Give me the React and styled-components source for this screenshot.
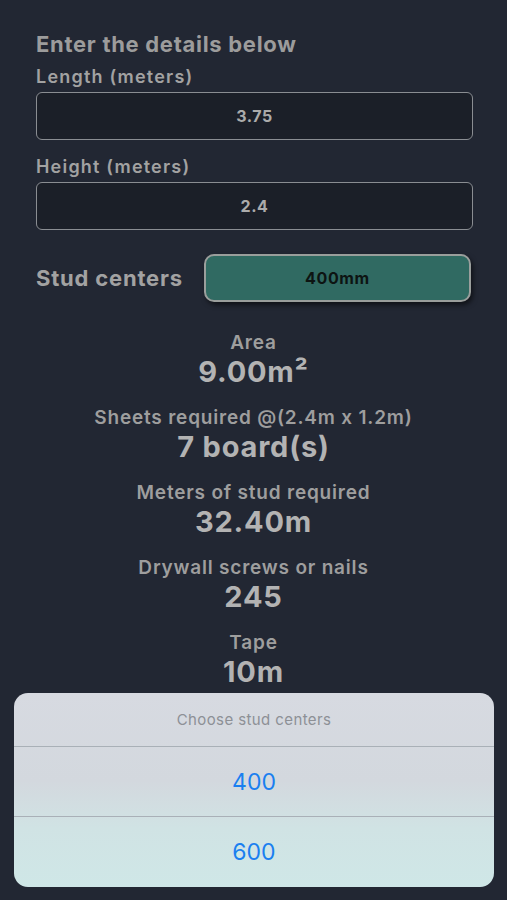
import styled, { createGlobalStyle } from 'styled-components'

const GlobalStyle = createGlobalStyle`
    html, body {
        margin: 0;
        padding: 0;
        background: #222733;
    }
    * {
        box-sizing: border-box;
    }
`

/**
 * Full screen container.
 */
const Screen = styled.div`
    position: relative;
    width: 507px;
    height: 900px;
    overflow: hidden;
    background: #222733;
    font-family: Inter, "Liberation Sans", sans-serif;
`

const Form = styled.section`
    display: flex;
    flex-direction: column;
    padding: 31px 34px 0 36px;
`

const Title = styled.h1`
    margin: 0;
    font-size: 22px;
    line-height: 26px;
    font-weight: 700;
    letter-spacing: 0.7px;
    color: #9c9c9c;
`

const FieldLabel = styled.label`
    margin-top: ${props => props.$gap}px;
    font-size: 18px;
    line-height: 22px;
    font-weight: 600;
    letter-spacing: 1.2px;
    color: #a2a2a2;
`

const Input = styled.div`
    margin-top: 4px;
    height: 48px;
    display: flex;
    align-items: center;
    justify-content: center;
    background: #1b1f28;
    border: 1px solid #8a8d92;
    border-radius: 6px;
    font-size: 16px;
    font-weight: 700;
    letter-spacing: 0.6px;
    color: #ababab;
`

const StudRow = styled.div`
    margin-top: 24px;
    display: flex;
    align-items: center;
    gap: 21px;
    padding-right: 2px;
`

const StudLabel = styled.span`
    font-size: 22px;
    line-height: 26px;
    font-weight: 700;
    letter-spacing: 0.8px;
    color: #a2a2a2;
`

const StudButton = styled.div`
    flex: 1;
    height: 48px;
    display: flex;
    align-items: center;
    justify-content: center;
    background: #306a62;
    border: 2px solid #9a9e9c;
    border-radius: 10px;
    box-shadow: 2px 3px 5px rgba(0, 0, 0, 0.55);
    font-size: 16px;
    font-weight: 700;
    letter-spacing: 0.6px;
    color: #0d1412;
`

const Results = styled.section`
    margin-top: 30px;
    display: flex;
    flex-direction: column;
    align-items: center;
    gap: 18px;
`

const Result = styled.div`
    display: flex;
    flex-direction: column;
    align-items: center;
`

const ResultLabel = styled.span`
    font-size: 19px;
    line-height: 22px;
    font-weight: 600;
    letter-spacing: 0.8px;
    color: #9e9e9e;
`

const ResultValue = styled.span`
    font-size: 29px;
    line-height: 35px;
    font-weight: 700;
    letter-spacing: 0.8px;
    color: #b3b3b3;
`

/**
 * Action sheet lying over the page.
 */
const Sheet = styled.div`
    position: absolute;
    left: 14px;
    right: 13px;
    bottom: 13px;
    border-radius: 14px;
    overflow: hidden;
    background: linear-gradient(180deg, #d7dae1 0%, #d3d8de 45%, #d0e3e4 70%, #cfe7e7 100%);
    display: flex;
    flex-direction: column;
`

const SheetTitle = styled.div`
    height: 54px;
    display: flex;
    align-items: center;
    justify-content: center;
    font-size: 15px;
    letter-spacing: 0.4px;
    color: #8d9096;
    border-bottom: 1px solid #a9b0b7;
`

const SheetOption = styled.div`
    height: 70px;
    display: flex;
    align-items: center;
    justify-content: center;
    font-size: 23px;
    color: #1a7ff0;
    border-bottom: ${props => (props.$last ? 'none' : '1px solid #a9b0b7')};
`

const results = [
    { label: 'Area', value: '9.00m²' },
    { label: 'Sheets required @(2.4m x 1.2m)', value: '7 board(s)' },
    { label: 'Meters of stud required', value: '32.40m' },
    { label: 'Drywall screws or nails', value: '245' },
    { label: 'Tape', value: '10m' },
]

function App() {
    return (
        <Screen>
            <GlobalStyle />
            <Form>
                <Title>Enter the details below</Title>
                <FieldLabel $gap={9}>Length (meters)</FieldLabel>
                <Input>3.75</Input>
                <FieldLabel $gap={16}>Height (meters)</FieldLabel>
                <Input>2.4</Input>
                <StudRow>
                    <StudLabel>Stud centers</StudLabel>
                    <StudButton>400mm</StudButton>
                </StudRow>
            </Form>
            <Results>
                {results.map(item => (
                    <Result key={item.label}>
                        <ResultLabel>{item.label}</ResultLabel>
                        <ResultValue>{item.value}</ResultValue>
                    </Result>
                ))}
            </Results>
            <Sheet>
                <SheetTitle>Choose stud centers</SheetTitle>
                <SheetOption>400</SheetOption>
                <SheetOption $last>600</SheetOption>
            </Sheet>
        </Screen>
    )
}

export default App
